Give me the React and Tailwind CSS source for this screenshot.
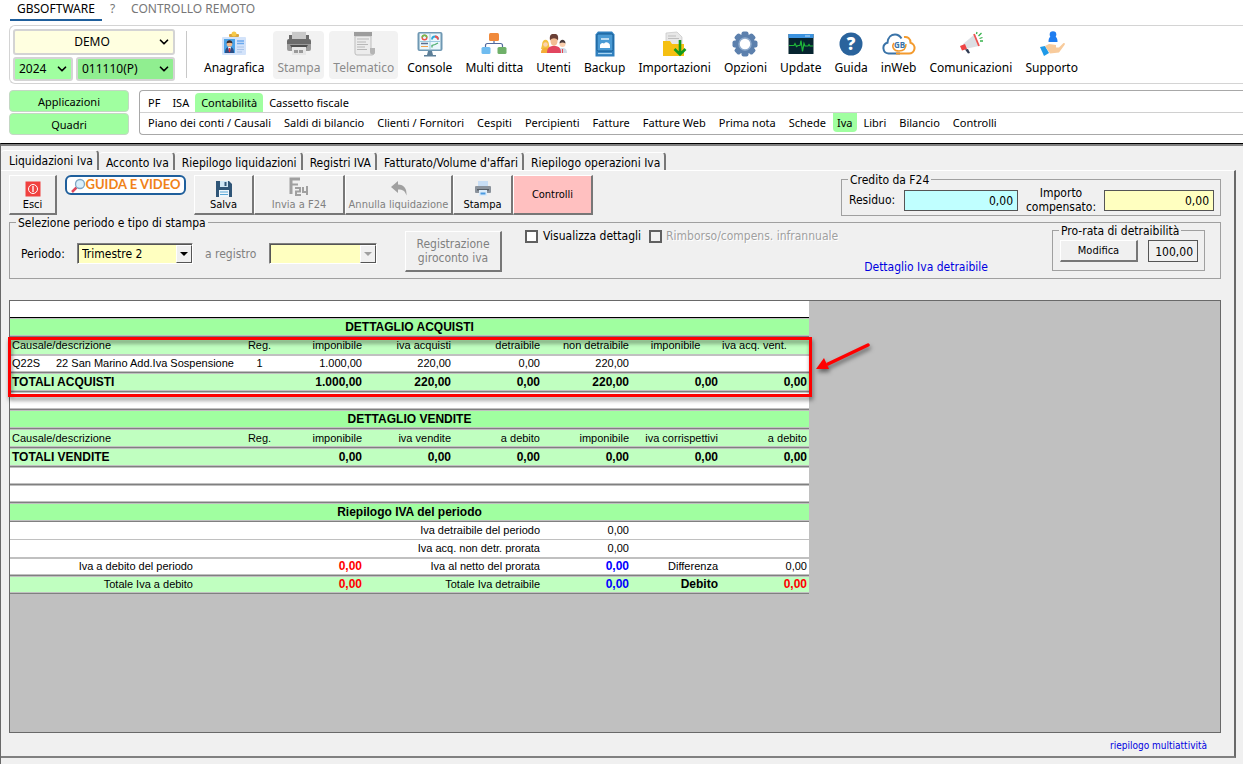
import React, { useState } from 'react';
import { ChevronDown } from 'lucide-react';

const ICONS = {
  card: (
    <>
      <rect x="1" y="6" width="24" height="18" rx="1" fill="#d3e3fa" />
      <rect x="3" y="8" width="11" height="14" fill="#4aa3e8" />
      <path d="M4 22c0-5 2-6 4.500-6s4.500 1 4.500 6z" fill="#2c4f86" />
      <path d="M7 16h3l-1.500 5z" fill="#fff" />
      <path d="M8 17h1l.5 3-1 1.500-1-1.500z" fill="#e8343a" />
      <circle cx="8.500" cy="13" r="2.800" fill="#f4b98b" />
      <path d="M5.500 12.500c0-4.500 6-4.500 6 0-1.500-1-4.500-1-6 0z" fill="#3c2b2b" />
      <path d="M16 10h7M16 12.500h7" stroke="#6aa8ee" strokeWidth="1.400" />
      <path d="M16 16h7M16 18.500h7M16 21h5" stroke="#a9c4ea" />
      <rect x="8" y="3" width="10" height="3" rx="1" fill="#d9a441" />
      <circle cx="13" cy="3" r="2.500" fill="#f7c948" />
    </>
  ),
  printerGray: (
    <>
      <path d="M6 1h14v7H6z" fill="#c9c9c9" />
      <rect x="1" y="8" width="24" height="7" rx="2" fill="#6b6b6b" />
      <path d="M3 4h3v4H3zM20 4h3v4h-3z" fill="#6b6b6b" />
      <path d="M1 13h24v5a2 2 0 0 1-2 2H3a2 2 0 0 1-2-2z" fill="#9b9b9b" />
      <path d="M4 14h18l-2 3H6z" fill="#4f4f4f" />
      <path d="M6 16h14v8H6z" fill="#e6e6e6" />
      <path d="M8 19h4v3H8zM13 19h4v3h-4z" fill="#9a9a9a" />
    </>
  ),
  scroll: (
    <>
      <path d="M4 5h16v13h3v4a2 2 0 0 1-2 2H6a2 2 0 0 1-2-2z" fill="#ececec" stroke="#bdbdbd" />
      <rect x="3" y="1" width="18" height="4" fill="#9d9d9d" />
      <path d="M6 8h12M6 11h9M6 13.500h11M6 16h8M6 18.500h10" stroke="#b8b8b8" />
      <path d="M19 17h5v4a2.500 2.500 0 0 1-5 0z" fill="#b5b5b5" />
    </>
  ),
  console: (
    <>
      <rect x="0.500" y="1" width="25" height="19" rx="2" fill="#6f98b3" />
      <rect x="2.500" y="2.500" width="21" height="16" fill="#eaf7fc" />
      <path d="M13 3v15M3 10.500h20" stroke="#9ccbe0" />
      <circle cx="7.500" cy="6.500" r="2.300" fill="none" stroke="#f0524d" strokeWidth="1.500" />
      <path d="M5.200 6.500a2.300 2.300 0 0 1 4.600 0" fill="none" stroke="#6ec04d" strokeWidth="1.500" />
      <path d="M15 8.500a3 3 0 0 1 6 0" fill="none" stroke="#2ba8d9" strokeWidth="1.800" />
      <path d="M18 5.500a3 3 0 0 1 3 3" fill="none" stroke="#f0524d" strokeWidth="1.800" />
      <path d="M4 12.500h7" stroke="#5b6f92" strokeWidth="1.500" />
      <path d="M4 15.500h7" stroke="#f5a04c" />
      <path d="M15 16.500v-2l3-1 3-1.500" fill="none" stroke="#4cae6e" strokeWidth="1.300" />
      <path d="M11 20h4l1 4h3v1.500H7V24h3z" fill="#5d7f98" />
    </>
  ),
  tree: (
    <>
      <path d="M13 9v3.500M4.500 17.500v-3q0-2 2-2h13q2 0 2 2v3" fill="none" stroke="#52699c" strokeWidth="1.200" />
      <rect x="8" y="2" width="10" height="8" rx="1.500" fill="#f08a3c" />
      <rect x="0.500" y="16" width="9" height="7" rx="1.500" fill="#6fbcf0" />
      <rect x="16.500" y="16" width="9" height="7" rx="1.500" fill="#6fb069" />
    </>
  ),
  users: (
    <>
      <path d="M1 14c0-7 7-7 7 0l1 4H0z" fill="#f3c141" />
      <circle cx="4.500" cy="13.500" r="2.300" fill="#fbd3b0" />
      <path d="M0 22c0-4 2-5 4.500-5S9 18 9 22z" fill="#f4ad36" />
      <circle cx="21.500" cy="13" r="3" fill="#fbcfae" />
      <path d="M18.500 12.500c0-5 6-5 6 0-2-1.500-4-1.500-6 0z" fill="#4a3a3a" />
      <path d="M17 22c0-4 2-5 4.500-5s4.500 1 4.500 5z" fill="#cfd9e6" />
      <path d="M21 18h1v4h-1z" fill="#e8494d" />
      <path d="M6 22c0-6 3-7 7-7s7 1 7 7z" fill="#e2465f" />
      <ellipse cx="13" cy="10" rx="3.500" ry="5" fill="#f3bd93" />
      <path d="M9 9.500C8 3 11 3 13 3s5 0 4 6.500c-2-3-6-3-8 0z" fill="#6a3f35" />
    </>
  ),
  backup: (
    <>
      <path d="M6 0.500h14l2.500 3v22h-19v-22z" fill="#2f7fbe" />
      <rect x="5" y="3" width="16" height="17" rx="1.500" fill="#4a9ad4" stroke="#155a92" />
      <path d="M9 8h8" stroke="#e4f2fb" strokeWidth="1.500" />
      <path d="M8 17v-3a2.500 2.500 0 0 1 4-1.500 3.500 3.500 0 0 1 6 3V17z" fill="#fff" />
      <path d="M6 22.500h14" stroke="#a8d4f2" strokeWidth="1.300" />
    </>
  ),
  folder: (
    <>
      <path d="M4 2l11-1 5 5v14H4z" fill="#e7e7e7" stroke="#c4c4c4" strokeWidth=".7" />
      <path d="M6 5h8M6 7.500h11" stroke="#bdbdbd" />
      <path d="M1 10h7l2 3h12v12H1z" fill="#f5c012" />
      <path d="M18 9v14M12.500 18l5.500 5.500 5.500-5.500" fill="none" stroke="#119a1b" strokeWidth="2.600" />
    </>
  ),
  gear: (
    <>
      <g fill="#5c80ad">
        <circle cx="13" cy="13" r="10" />
        <rect x="9.500" y="0.500" width="7" height="25" rx="2" />
        <rect x="9.500" y="0.500" width="7" height="25" rx="2" transform="rotate(45 13 13)" />
        <rect x="9.500" y="0.500" width="7" height="25" rx="2" transform="rotate(90 13 13)" />
        <rect x="9.500" y="0.500" width="7" height="25" rx="2" transform="rotate(135 13 13)" />
      </g>
      <circle cx="13" cy="13" r="6" fill="#fff" stroke="#8fabcd" strokeWidth="1.500" />
    </>
  ),
  pulse: (
    <>
      <rect x="0.500" y="3" width="25" height="20" fill="#06242f" />
      <rect x="0.500" y="3" width="25" height="4" fill="#3c93e0" />
      <path d="M17 5h5" stroke="#bfe0fa" />
      <path d="M1 14.500h5l1-2 1.500 3 1.500-1h2l1-5 1.500 11 1.500-8 1 2.500h3l1-1.500 1 1.500h3" fill="none" stroke="#1fb83a" strokeWidth="1.200" />
    </>
  ),
  cloud: (
    <>
      <path d="M18 22.500H6.500a5.500 5.500 0 0 1-1-10.800C6 6 9.500 3.500 13 3.500s5 1.500 6.500 4" fill="none" stroke="#3a73a8" strokeWidth="2" />
      <path d="M14 22.500h13a5.500 5.500 0 0 0 1.500-10.800C28.500 7.500 25.500 5.500 22 6" fill="none" stroke="#f39a2d" strokeWidth="2" />
      <path d="M12 12c-3 4 0 8 5 8s7-3 7-7" fill="none" stroke="#f39a2d" strokeWidth="1.500" />
      <text x="12" y="17" fontSize="8" fontWeight="700" fill="#3a73a8" fontFamily="Open Sans, sans-serif">GB</text>
    </>
  ),
  horn: (
    <>
      <path d="M5 13l12-10 4 12-14 3z" fill="#dcdfe4" />
      <path d="M16 3l5 12" stroke="#ef5350" strokeWidth="1.800" />
      <path d="M2 15l5-2 2 5-5 1.500z" fill="#ef4344" />
      <path d="M7 18.500l3-.5 2 4-2 .5z" fill="#2f3b52" />
      <path d="M18.500 3l.5-2M20.500 5l3-3M22 10h3M21.500 7.500l3-1" stroke="#37b24d" strokeWidth="1.300" />
    </>
  ),
  support: (
    <>
      <circle cx="14" cy="3.500" r="3.300" fill="#1f7df0" />
      <path d="M9.500 11c0-5 2-6 4.500-6s4.500 1 4.500 6z" fill="#1f7df0" />
      <path d="M1 16l5-1 4 7-5 3z" fill="#1f9ae8" />
      <path d="M6 15l4-2 7 1v2.500h3l4-4c1.500-1 2.500 0 1.500 1.500L20 21.500l-9 1z" fill="#f8cb9c" />
    </>
  ),
};

const toolbar = [
  { label: 'Anagrafica', icon: 'card' },
  { label: 'Stampa', icon: 'printerGray', disabled: true },
  { label: 'Telematico', icon: 'scroll', disabled: true },
  { label: 'Console', icon: 'console' },
  { label: 'Multi ditta', icon: 'tree' },
  { label: 'Utenti', icon: 'users' },
  { label: 'Backup', icon: 'backup' },
  { label: 'Importazioni', icon: 'folder' },
  { label: 'Opzioni', icon: 'gear' },
  { label: 'Update', icon: 'pulse' },
  { label: 'Guida', icon: 'help' },
  { label: 'inWeb', icon: 'cloud' },
  { label: 'Comunicazioni', icon: 'horn' },
  { label: 'Supporto', icon: 'support' },
];

const appMenu = ['PF', 'ISA', 'Contabilità', 'Cassetto fiscale'];

const subMenu = [
  'Piano dei conti / Causali', 'Saldi di bilancio', 'Clienti / Fornitori', 'Cespiti', 'Percipienti',
  'Fatture', 'Fatture Web', 'Prima nota', 'Schede', 'Iva', 'Libri', 'Bilancio', 'Controlli',
];

const tabs = [
  'Liquidazioni Iva', 'Acconto Iva', 'Riepilogo liquidazioni', 'Registri IVA',
  "Fatturato/Volume d'affari", 'Riepilogo operazioni Iva',
];

const ToolIcon = ({ name }) => {
  if (name === 'help') {
    return (
      <svg className="h-[26px] w-[26px]" viewBox="0 0 26 26">
        <circle cx="13" cy="13" r="11.500" fill="#2a639c" />
        <text x="13" y="19" textAnchor="middle" fontSize="17" fontWeight="800" fill="#fff" fontFamily="Open Sans, sans-serif">?</text>
      </svg>
    );
  }
  if (name === 'cloud') {
    return <svg className="h-[26px] w-[34px]" viewBox="0 0 34 26">{ICONS.cloud}</svg>;
  }
  return <svg className="h-[26px] w-[26px]" viewBox="0 0 26 26">{ICONS[name]}</svg>;
};

const TopSelect = ({ label, value, className, selectClass = 'pl-1' }) => (
  <div className={`relative rounded-[3px] border-2 border-[#d4d4d4] ${className}`}>
    <select aria-label={label} defaultValue={value} className={`h-full w-full appearance-none bg-transparent pr-5 outline-none ${selectClass}`}>
      <option>{value}</option>
    </select>
    <ChevronDown className="pointer-events-none absolute right-0.5 top-1/2 h-3.5 w-3.5 -translate-y-1/2" strokeWidth={3} />
  </div>
);

// Sunken combo box with the raised arrow button
const ClassicSelect = ({ id, value, disabled, className }) => (
  <div className={`relative h-[21px] border border-b-white border-l-[#808080] border-r-white border-t-[#808080] bg-[#ffffc0] shadow-[inset_1px_1px_#555] ${className}`}>
    <select id={id} defaultValue={value} disabled={disabled} className="h-full w-full appearance-none bg-transparent pl-1 pt-px outline-none">
      <option>{value}</option>
    </select>
    <span className="pointer-events-none absolute bottom-0 right-0 top-px flex w-4 items-center justify-center border border-b-[#555] border-l-white border-r-[#555] border-t-white bg-[#f0f0f0]">
      <svg className="h-1 w-2" viewBox="0 0 8 4"><path d="M0 0h8L4 4z" fill={disabled ? '#a0a0a0' : '#000'} /></svg>
    </span>
  </div>
);

const RaisedButton = ({ children, className = '', ...props }) => (
  <button
    type="button"
    className={`border-b-2 border-l border-r-2 border-t border-b-[#777] border-l-white border-r-[#777] border-t-white ${className}`}
    {...props}
  >
    {children}
  </button>
);

const Group = ({ legend, className = '', children }) => (
  <fieldset className={`min-w-0 border border-[#a0a0a0] ${className}`}>
    <legend className="ml-1.5 h-3 whitespace-nowrap px-0.5 leading-[14px]">{legend}</legend>
    {children}
  </fieldset>
);

const TONES = {
  title: 'h-[19px] bg-[#a0ffa0] text-[12px] font-bold',
  subhead: 'h-[18px] bg-[#c0ffc0]',
  head: 'h-[19px] bg-[#c0ffc0]',
  total: 'h-[19px] bg-[#c0ffc0] text-[12px] font-bold',
  sum: 'h-[18px] bg-[#c0ffc0]',
  plain: 'h-[18px] bg-white',
};

// thin rows have a single light rule, the others a dark one between two light ones
const Row = ({ tone = 'plain', thin, cells }) => (
  <tr className={TONES[tone]}>
    {cells.map((cell, i) => (
      <td
        key={i}
        colSpan={cell.span || 1}
        className={`whitespace-nowrap border-b px-0.5 leading-[15px] ${
          thin ? 'border-[#c0c0c0]' : 'border-[#808080] shadow-[inset_0_-1px_#c0c0c0,inset_0_1px_#c0c0c0]'
        } ${cell.cls || 'text-right'}`}
      >
        {cell.text}
      </td>
    ))}
  </tr>
);

const left = (text, span) => ({ text, span, cls: 'text-left' });
const center = (text, span) => ({ text, span, cls: 'text-center' });
const right = (text, span) => ({ text, span });
const red = (text) => ({ text, cls: 'text-right text-[12px] font-bold text-[#ff0000]' });
const blue = (text) => ({ text, cls: 'text-right text-[12px] font-bold text-[#0000ff]' });

const LiquidazioneTable = () => (
  <table className="w-[799px] table-fixed border-separate border-spacing-0 font-['Liberation_Sans',sans-serif] text-[11px]">
    <colgroup>
      <col className="w-[44px]" />
      <col className="w-[141px]" />
      <col className="w-[49px]" />
      <col className="w-[31px]" />
      <col span={6} className="w-[89px]" />
    </colgroup>
    <tbody>
      <tr className="h-[17px] bg-white">
        <td colSpan={10} className="border-b border-black" />
      </tr>
      <Row tone="title" cells={[center('DETTAGLIO ACQUISTI', 10)]} />
      <Row tone="subhead" thin cells={[left('Causale/descrizione', 3), center('Reg.'), right('imponibile'), right('iva acquisti'), right('detraibile'), right('non detraibile'), center('imponibile'), left('iva acq. vent.')]} />
      <Row cells={[left('Q22S'), left('22 San Marino Add.Iva Sospensione', 2), center('1'), right('1.000,00'), right('220,00'), right('0,00'), right('220,00'), right(''), right('')]} />
      <Row tone="total" cells={[left('TOTALI ACQUISTI', 4), right('1.000,00'), right('220,00'), right('0,00'), right('220,00'), right('0,00'), right('0,00')]} />
      <Row cells={[right('', 10)]} />
      <Row tone="title" cells={[center('DETTAGLIO VENDITE', 10)]} />
      <Row tone="head" cells={[left('Causale/descrizione', 3), center('Reg.'), right('imponibile'), right('iva vendite'), right('a debito'), right('imponibile'), right('iva corrispettivi'), right('a debito')]} />
      <Row tone="total" cells={[left('TOTALI VENDITE', 4), right('0,00'), right('0,00'), right('0,00'), right('0,00'), right('0,00'), right('0,00')]} />
      <Row cells={[right('', 10)]} />
      <Row cells={[right('', 10)]} />
      <Row tone="title" cells={[center('Riepilogo IVA del periodo', 10)]} />
      <Row thin cells={[right('', 5), right('Iva detraibile del periodo', 2), right('0,00'), right(''), right('')]} />
      <Row thin cells={[right('', 5), right('Iva acq. non detr. prorata', 2), right('0,00'), right(''), right('')]} />
      <Row cells={[right('Iva a debito del periodo', 2), right('', 2), red('0,00'), right('Iva al netto del prorata', 2), blue('0,00'), right('Differenza'), right('0,00')]} />
      <Row tone="sum" cells={[right('Totale Iva a debito', 2), right('', 2), red('0,00'), right('Totale Iva detraibile', 2), blue('0,00'), { text: 'Debito', cls: 'text-right text-[12px] font-bold' }, red('0,00')]} />
    </tbody>
  </table>
);

const App = () => {
  const [activeTab, setActiveTab] = useState('Liquidazioni Iva');
  const [dettagli, setDettagli] = useState(false);

  return (
    <div className="flex min-h-screen flex-col overflow-x-hidden bg-white font-['Noto_Sans','Open_Sans',sans-serif] text-[12px] text-black">
      {/* Header */}
      <header className="flex h-[143px] flex-col">
        <nav className="flex h-[21px] pl-2.5 text-[#777]">
          <a href="#gb" className="border-b-2 border-[#1f5f9c] px-[7px] text-black">GBSOFTWARE</a>
          <a href="#help" className="px-2">?</a>
          <a href="#remoto" className="px-2">CONTROLLO REMOTO</a>
        </nav>

        <div className="ml-[9px] mt-1 flex h-[59px] items-center rounded-l-md border border-r-0 border-[#d4d4d4] pl-[3px]">
          <div className="flex w-[162px] flex-col gap-0.5">
            <TopSelect label="Ditta" value="DEMO" className="h-[26px] bg-[#ffffe0]" selectClass="pl-4 text-center" />
            <div className="flex gap-[3px]">
              <TopSelect label="Anno" value="2024" className="h-[24px] w-[60px] bg-[#a0ffa0]" />
              <TopSelect label="Codice ditta" value="011110(P)" className="h-[24px] flex-1 bg-[#90ee90]" />
            </div>
          </div>
          <div className="ml-[11px] h-[47px] w-px bg-[#c8c8c8]" />
          <div className="ml-[13px] flex gap-[5px]">
            {toolbar.map((item) => (
              <button
                key={item.label}
                type="button"
                disabled={item.disabled}
                className={`flex h-12 flex-col items-center whitespace-nowrap rounded px-1 leading-[18px] ${
                  item.disabled ? 'bg-[#f2f2f2] text-[#8a8a8a]' : ''
                }`}
              >
                <ToolIcon name={item.icon} />
                <span className="mt-0.5">{item.label}</span>
              </button>
            ))}
          </div>
        </div>

        <div className="ml-[9px] mt-1.5 flex gap-2.5 text-[11px]">
          <div className="flex w-[120px] flex-col gap-px">
            <button type="button" className="h-[22px] rounded border border-[#c4d8c4] bg-[#a0ffa0] pt-0.5">Applicazioni</button>
            <button type="button" className="h-[22px] rounded border border-[#c4d8c4] bg-[#a0ffa0] pt-0.5">Quadri</button>
          </div>
          <div className="flex h-[45px] flex-1 flex-col rounded-l border border-r-0 border-[#a8a8a8]">
            <nav className="flex h-[22px] items-end border-b border-[#d0d0d0] pl-0.5">
              {appMenu.map((item) => (
                <a key={item} href="#app" className={`rounded-t-sm px-1.5 leading-[19px] ${item === 'Contabilità' ? 'bg-[#a0ffa0]' : ''}`}>
                  {item}
                </a>
              ))}
            </nav>
            <nav className="flex gap-px pl-0.5">
              {subMenu.map((item) => (
                <a key={item} href="#sub" className={`whitespace-nowrap rounded-b-sm leading-[19px] ${item === 'Iva' ? 'bg-[#a0ffa0] px-1' : 'px-1.5'}`}>
                  {item}
                </a>
              ))}
            </nav>
          </div>
        </div>
      </header>

      {/* Main window */}
      <main className="flex flex-1 flex-col border-l border-t border-l-[#696969] border-t-black bg-[#f0f0f0] pb-1.5 pr-[7px] font-['DejaVu_Sans_Condensed','DejaVu_Sans',sans-serif] text-[11px]">
        <div className="-mr-[7px] h-1.5 border-t-2 border-[#808080]" />
        <div role="tablist" className="flex h-5 items-end">
          {tabs.map((tab) => (
            <button
              key={tab}
              type="button"
              role="tab"
              aria-selected={activeTab === tab}
              onClick={() => setActiveTab(tab)}
              className={`whitespace-nowrap rounded-t-sm border-r-2 border-t border-r-[#777] border-t-white pr-1 text-[12px] ${
                activeTab === tab ? 'h-5 pl-2' : 'h-[18px] pl-[7px] pt-px'
              }`}
            >
              {tab}
            </button>
          ))}
        </div>

        <section className="flex flex-1 flex-col border-b-2 border-r-2 border-t border-b-[#808080] border-r-[#696969] border-t-white pl-2 pr-[13px]">
          {/* Actions */}
          <div className="flex h-[45px] items-end">
            <div className="mt-1 flex h-10 items-start self-start">
              <RaisedButton className="flex h-10 w-[48px] flex-col items-center justify-end">
                <svg className="h-4 w-4" viewBox="0 0 16 16">
                  <rect x="0.500" y="0.500" width="15" height="15" fill="#f0413f" />
                  <circle cx="8" cy="8" r="4.500" fill="none" stroke="#fff" />
                  <path d="M8 5v6" stroke="#fff" strokeWidth="1.300" />
                </svg>
                <span className="leading-4">Esci</span>
              </RaisedButton>
              <a href="#guida" className="ml-2 flex h-5 w-[121px] items-center justify-center rounded-md border-2 border-[#1f5f9c] bg-white font-['Lato',sans-serif] text-[13px] font-bold text-[#f08218]">
                <svg className="h-[15px] w-[15px]" viewBox="0 0 15 15">
                  <path d="M1 14l4.500-4.500" stroke="#e0485a" strokeWidth="2.500" />
                  <circle cx="9" cy="6" r="4.500" fill="#d9effb" stroke="#7fa6c4" strokeWidth="1.300" />
                </svg>
                GUIDA E VIDEO
              </a>
              <RaisedButton className="ml-2 flex h-10 w-[60px] flex-col items-center justify-end">
                <svg className="h-4 w-4" viewBox="0 0 16 16">
                  <path d="M0 0h13l3 3v13H0z" fill="#2f5577" />
                  <path d="M4 0h8v6H4z" fill="#cfe6f5" />
                  <path d="M8.500 1h2v4h-2z" fill="#2f5577" />
                  <path d="M3 9h10v7H3z" fill="#f0f7fb" />
                  <path d="M4 11h8M4 13.500h8" stroke="#5aa7d6" />
                </svg>
                <span className="leading-4">Salva</span>
              </RaisedButton>
              <RaisedButton disabled className="flex h-10 w-[91px] flex-col items-center justify-end text-[#808080]">
                <svg className="h-5 w-5" viewBox="0 0 20 20" fill="none" stroke="#a0a0a0" strokeWidth="2">
                  <path d="M2 17V2h9" strokeWidth="3" />
                  <path d="M2 7.500h7M6 11h5v3.500H7V18h5M14 10v5h5M18 9v9" />
                </svg>
                <span className="leading-4">Invia a F24</span>
              </RaisedButton>
              <RaisedButton disabled className="flex h-10 w-[108px] flex-col items-center justify-end whitespace-nowrap text-[#808080]">
                <svg className="h-4 w-4" viewBox="0 0 16 16">
                  <path d="M0 6l7-6v3.500c6 0 9 4 8.500 11C14 10 12 8.500 7 8.500V12z" fill="#a0a0a0" />
                </svg>
                <span className="leading-4">Annulla liquidazione</span>
              </RaisedButton>
              <RaisedButton className="flex h-10 w-[60px] flex-col items-center justify-end">
                <svg className="h-4 w-4" viewBox="0 0 16 16">
                  <path d="M3 0h10v5H3z" fill="#c8def5" />
                  <rect y="5" width="16" height="7" rx="1" fill="#8b939c" />
                  <path d="M2 8h12v1.500H2z" fill="#555d66" />
                  <path d="M4 9h8v6H4z" fill="#dcecfa" />
                  <path d="M5.500 11.500h5v2h-5z" fill="#4a9ae0" />
                </svg>
                <span className="leading-4">Stampa</span>
              </RaisedButton>
              <RaisedButton className="h-10 w-[80px] bg-[#ffc0c0] pt-0.5">Controlli</RaisedButton>
            </div>

            <Group legend="Credito da F24" className="ml-auto h-[43px] w-[380px] text-[12px]">
              <div className="flex h-[30px] items-center pl-[7px] pr-1.5">
                <label htmlFor="residuo">Residuo:</label>
                <input id="residuo" readOnly value="0,00" className="ml-auto h-[21px] w-[114px] border border-[#555] bg-[#c0ffff] px-1 pt-0.5 text-right" />
                <label htmlFor="importo" className="w-[86px] text-center leading-[14px]">Importo compensato:</label>
                <input id="importo" defaultValue="0,00" className="h-[21px] w-[110px] border border-[#555] bg-[#ffffc0] px-1 pt-0.5 text-right" />
              </div>
            </Group>
          </div>

          {/* Filters */}
          <Group legend="Selezione periodo e tipo di stampa" className="h-[63px] text-[12px]">
            <div className="flex h-[50px] items-start pl-[11px] pr-[15px]">
              <div className="mt-[15px] flex items-center">
                <label htmlFor="periodo" className="w-14">Periodo:</label>
                <ClassicSelect id="periodo" value="Trimestre 2" className="w-[116px]" />
                <label htmlFor="registro" className="ml-3 w-16 text-[#808080]">a registro</label>
                <ClassicSelect id="registro" value="" disabled className="w-[108px]" />
              </div>
              <RaisedButton disabled className="ml-7 mt-[3px] h-[41px] w-[97px] leading-[14px] text-[#808080]">
                Registrazione giroconto iva
              </RaisedButton>
              <div className="-mt-px ml-[23px] flex gap-2 whitespace-nowrap">
                <label className="flex items-center gap-[5px]">
                  <input type="checkbox" checked={dettagli} onChange={(e) => setDettagli(e.target.checked)} className="h-[13px] w-[13px] appearance-none border-2 border-[#606060] bg-white checked:bg-[#606060]" />
                  Visualizza dettagli
                </label>
                <label className="flex items-center gap-1 text-[#a0a0a0] [text-shadow:1px_1px_#fff]">
                  <input type="checkbox" disabled className="h-[13px] w-[13px] appearance-none border-2 border-[#606060]" />
                  Rimborso/compens. infrannuale
                </label>
              </div>
              <a href="#dettaglio" className="ml-auto mr-16 mt-[30px] whitespace-nowrap text-[#0000e0]">Dettaglio Iva detraibile</a>
              <Group legend="Pro-rata di detraibilità" className="-mt-1 h-[47px] w-[153px] shrink-0">
                <div className="flex gap-2.5 pl-[7px] pt-1">
                  <RaisedButton className="h-[22px] w-[78px] pt-0.5 text-[11px]">Modifica</RaisedButton>
                  <input aria-label="Percentuale di detraibilità" readOnly value="100,00" className="h-[22px] w-[50px] border border-[#555] px-1 pt-0.5 text-right" />
                </div>
              </Group>
            </div>
          </Group>

          {/* Grid */}
          <div className="relative mt-[21px] flex-1 border border-[#696969] bg-[#c0c0c0]">
            <LiquidazioneTable />
            <div className="pointer-events-none absolute -left-0.5 top-9 h-[60px] w-[804px] border-[3px] border-[#ff0000] drop-shadow-[1px_3px_2px_rgba(0,0,0,0.5)]" />
            <svg className="pointer-events-none absolute left-[804px] top-[38px] h-9 w-[62px] drop-shadow-[1px_3px_2px_rgba(0,0,0,0.5)]" viewBox="0 0 62 36">
              <path d="M54 6L14 25" stroke="#ff0000" strokeWidth="3.500" strokeLinecap="round" />
              <path d="M2 30l8-11 5 11z" fill="#ff0000" />
            </svg>
          </div>
          <div className="flex h-[23px] items-center justify-end pr-3.5 pt-0.5">
            <a href="#riepilogo" className="text-[10px] text-[#0000e0]">riepilogo multiattività</a>
          </div>
        </section>
      </main>
    </div>
  );
};

export default App;
